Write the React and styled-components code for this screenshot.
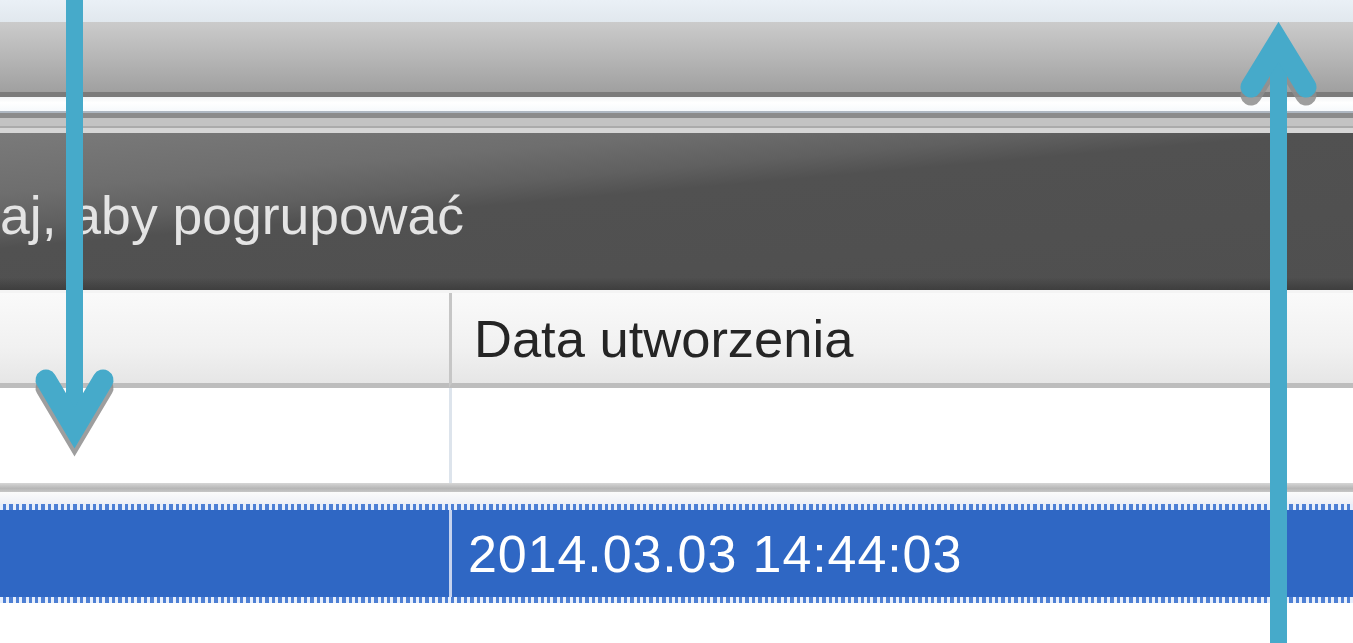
import React from 'react';
import styled, { createGlobalStyle } from 'styled-components';

const GlobalStyle = createGlobalStyle`
  html, body { margin: 0; padding: 0; background: #fff; }
  body { font-family: "Liberation Sans", Arial, sans-serif; }
`;

const Screen = styled.div`
  position: relative;
  width: 100vw;
  height: 100vh;
  overflow: hidden;
  display: flex;
  flex-direction: column;
  background: #fff;
`;

const TopStrip = styled.div`
  height: 22px;
  flex: none;
  background: linear-gradient(#eaf0f6, #e1e8ee);
`;

const Toolbar = styled.div`
  height: 70px;
  flex: none;
  background: linear-gradient(#cbcbcb, #b4b4b4 55%, #a0a0a0);
`;

const Band = styled.div`
  height: ${p => p.h}px;
  flex: none;
  background: ${p => p.bg};
`;

const GroupPanel = styled.div`
  height: 157px;
  flex: none;
  display: flex;
  align-items: center;
  box-sizing: border-box;
  padding-top: 8px;
  background:
    linear-gradient(transparent 92%, #3e3e3e),
    linear-gradient(175deg, #7a7a7a 0%, #6e6e6e 22%, #606060 34%, #515151 42%, #4f4f4f 100%);
`;

const GroupHint = styled.span`
  font-size: 53.5px;
  color: #e4e4e4;
  white-space: nowrap;
`;

const Row = styled.div`
  display: grid;
  grid-template-columns: 449px 1fr;
  flex: none;
  height: ${p => p.h}px;
`;

const HeaderCell = styled.div`
  display: flex;
  align-items: center;
  padding-left: 22px;
  background: linear-gradient(#fafafa, #f1f1f1 60%, #e6e6e6);
  border-bottom: 5px solid #bdbdbd;
  border-left: ${p => (p.first ? 'none' : '3px solid #c6c6c6')};
  font-size: 52.5px;
  color: #252525;
  white-space: nowrap;
`;

const EmptyCell = styled.div`
  background: #fff;
  border-left: ${p => (p.first ? 'none' : '3px solid #dde4ec')};
`;

const RowSeparator = styled.div`
  height: 9px;
  flex: none;
  background: linear-gradient(#d6d6d6, #b6b6b6 60%, #c6c6c6);
`;

const Gap = styled.div`
  height: 12px;
  flex: none;
  background: linear-gradient(#fbfbfb, #eef0f6);
`;

const DottedEdge = styled.div`
  height: 6px;
  flex: none;
  background: repeating-linear-gradient(90deg, #e6eefb 0 3px, #4d7fd4 3px 6.4px);
  filter: blur(0.6px);
`;

const SelectedRow = styled.div`
  display: grid;
  grid-template-columns: 449px 1fr;
  height: 87px;
  flex: none;
  background: #2f67c4;
`;

const SelectedCell = styled.div`
  display: flex;
  align-items: center;
  padding-left: 16px;
  border-left: ${p => (p.first ? 'none' : '3px solid #c6d3ee')};
  font-size: 52px;
  letter-spacing: 0.9px;
  color: #ffffff;
  white-space: nowrap;
`;

const ArrowLayer = styled.svg`
  position: absolute;
  left: 0;
  top: 0;
  width: 1353px;
  height: 643px;
  pointer-events: none;
`;

function Arrow({ shaft, head, color, shadow }) {
  return (
    <g fill="none">
      <polyline points={head} stroke={shadow} strokeWidth="21" transform="translate(0 8)" opacity="0.85"
        strokeLinecap="round" strokeLinejoin="miter" strokeMiterlimit="8" />
      <line {...shaft} stroke={color} strokeWidth="17" />
      <polyline points={head} stroke={color} strokeWidth="21"
        strokeLinecap="round" strokeLinejoin="miter" strokeMiterlimit="8" />
    </g>
  );
}

export default function App() {
  return (
    <>
      <GlobalStyle />
      <Screen>
        <TopStrip />
        <Toolbar />
        <Band h={5} bg="#7b7b7b" />
        <Band h={14} bg="linear-gradient(#f2f4f6, #ffffff 40%, #f6f9fc)" />
        <Band h={2} bg="#aeb7c1" />
        <Band h={5} bg="#8b8b8b" />
        <Band h={8} bg="#c3c3c3" />
        <Band h={2} bg="#ababab" />
        <Band h={5} bg="#d6d6d6" />
        <GroupPanel>
          <GroupHint>aj, aby pogrupować</GroupHint>
        </GroupPanel>
        <Band h={3} bg="#f4f4f4" />
        <Row h={95}>
          <HeaderCell first />
          <HeaderCell>Data utworzenia</HeaderCell>
        </Row>
        <Row h={95}>
          <EmptyCell first />
          <EmptyCell />
        </Row>
        <RowSeparator />
        <Gap />
        <DottedEdge />
        <SelectedRow>
          <SelectedCell first />
          <SelectedCell>2014.03.03 14:44:03</SelectedCell>
        </SelectedRow>
        <DottedEdge />
      </Screen>
      <ArrowLayer viewBox="0 0 1353 643">
        <Arrow
          shaft={{ x1: 74.5, y1: -5, x2: 74.5, y2: 425 }}
          head="46,380 74.5,428 103,380"
          color="#46aaca"
          shadow="#8d8d8d"
        />
        <Arrow
          shaft={{ x1: 1278.5, y1: 650, x2: 1278.5, y2: 48 }}
          head="1251,87 1278.5,42 1306,87"
          color="#46aaca"
          shadow="#8d8d8d"
        />
      </ArrowLayer>
    </>
  );
}
